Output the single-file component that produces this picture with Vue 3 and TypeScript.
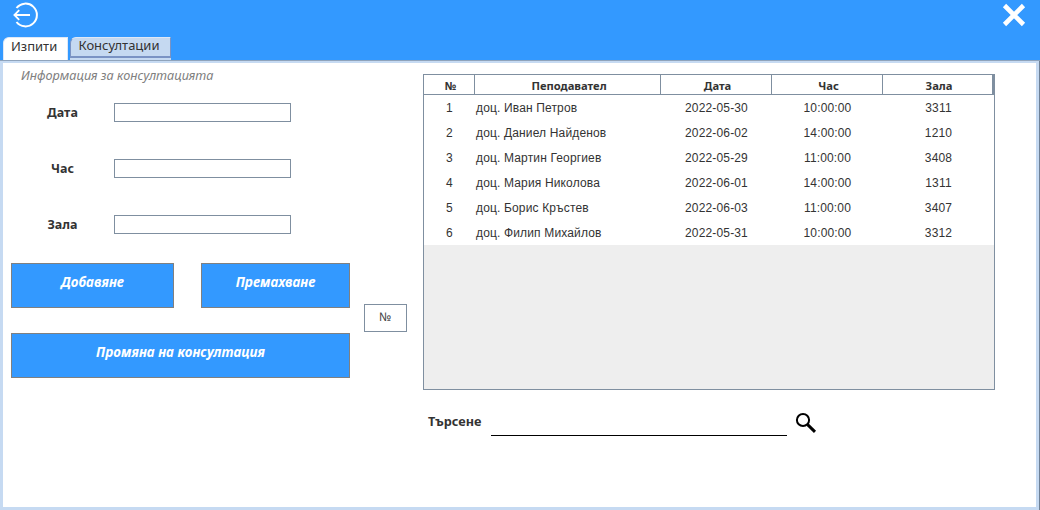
<template>
  <div class="app">
    <header class="top">
      <div class="top-row">
        <button type="button" class="icon-btn" aria-label="Назад">
          <svg width="27" height="27" viewBox="0 0 27 27" fill="none" stroke="#fff" stroke-width="2">
            <path d="M5.5 6A11.4 11.4 0 1 1 5.5 20" />
            <path d="M19 13H3.4M8.2 8.2 3.4 13l4.8 4.8" stroke-width="1.8" />
          </svg>
        </button>
        <button type="button" class="icon-btn close" aria-label="Затвори">
          <svg width="24" height="24" viewBox="0 0 24 24" stroke="#fff" stroke-width="4.6">
            <path d="M2.5 2.5 21.5 21.5M21.5 2.5 2.5 21.5" />
          </svg>
        </button>
      </div>
      <nav class="tabs">
        <button
          v-for="tab in tabs"
          :key="tab"
          type="button"
          class="tab"
          :class="{ active: tab === activeTab }"
          @click="activeTab = tab"
        >
          {{ tab }}
        </button>
      </nav>
    </header>

    <main class="body">
      <section class="left">
        <p class="legend">Информация за консултацията</p>
        <div class="fields">
          <label v-for="field in fields" :key="field" class="field">
            <span class="field-label">{{ field }}</span>
            <input class="field-input" type="text" />
          </label>
        </div>
        <div class="actions">
          <button type="button" class="action">Добавяне</button>
          <button type="button" class="action">Премахване</button>
          <button type="button" class="action wide">Промяна на консултация</button>
        </div>
      </section>

      <div class="middle">
        <div class="id-box">№</div>
      </div>

      <section class="right">
        <div class="table-wrap">
          <div class="thead">
            <div v-for="col in columns" :key="col" class="th">{{ col }}</div>
          </div>
          <div v-for="row in rows" :key="row.id" class="tr">
            <div class="td">{{ row.id }}</div>
            <div class="td name">{{ row.name }}</div>
            <div class="td">{{ row.date }}</div>
            <div class="td">{{ row.time }}</div>
            <div class="td">{{ row.room }}</div>
          </div>
        </div>
        <div class="search">
          <label class="search-label" for="q">Търсене</label>
          <input id="q" v-model="query" class="search-input" type="text" />
          <svg class="search-icon" width="22" height="22" viewBox="0 0 22 22" fill="none" stroke="#000">
            <circle cx="8" cy="8" r="6.1" stroke-width="2" />
            <path d="M12.6 12.6 20 19.8" stroke-width="3" />
          </svg>
        </div>
      </section>
    </main>
  </div>
</template>

<script setup lang="ts">
import { ref } from 'vue'

const tabs = ['Изпити', 'Консултации']
const activeTab = ref('Изпити')
const query = ref('')

const fields = ['Дата', 'Час', 'Зала']
const columns = ['№', 'Пеподавател', 'Дата', 'Час', 'Зала']

const rows = [
  { id: 1, name: 'доц. Иван Петров', date: '2022-05-30', time: '10:00:00', room: 3311 },
  { id: 2, name: 'доц. Даниел Найденов', date: '2022-06-02', time: '14:00:00', room: 1210 },
  { id: 3, name: 'доц. Мартин Георгиев', date: '2022-05-29', time: '11:00:00', room: 3408 },
  { id: 4, name: 'доц. Мария Николова', date: '2022-06-01', time: '14:00:00', room: 1311 },
  { id: 5, name: 'доц. Борис Кръстев', date: '2022-06-03', time: '11:00:00', room: 3407 },
  { id: 6, name: 'доц. Филип Михайлов', date: '2022-05-31', time: '10:00:00', room: 3312 }
]
</script>

<style>
html,
body {
  margin: 0;
  background: #fff;
}
</style>

<style scoped>
.app {
  width: 1040px;
  height: 510px;
  display: flex;
  flex-direction: column;
  overflow: hidden;
  font-family: "Noto Sans", "DejaVu Sans", sans-serif;
  color: #222;
}

.top {
  box-sizing: border-box;
  height: 61px;
  background: #3399ff;
  border-bottom: 1px solid #8fa3bb;
  display: flex;
  flex-direction: column;
  justify-content: space-between;
  flex: none;
}

.top-row {
  display: flex;
  justify-content: space-between;
  align-items: flex-start;
  padding: 2px 14px 0 11px;
}

.icon-btn {
  border: none;
  background: none;
  padding: 0;
  display: block;
  cursor: pointer;
}

.icon-btn svg {
  display: block;
}

.icon-btn.close {
  margin-top: 1px;
}

.tabs {
  display: flex;
  align-items: flex-start;
  padding-left: 3px;
  gap: 2px;
}

.tab {
  box-sizing: border-box;
  height: 21px;
  border: 1px solid #7a93c4;
  border-bottom-width: 2px;
  border-top-color: #dfe8f6;
  border-top-left-radius: 6px;
  background: #c5d9f1;
  box-shadow: 0 2px 0 #c6daf2;
  color: #333;
  font: 13px/15px "Noto Sans", "DejaVu Sans", sans-serif;
  padding: 0 10px 3px 7px;
  width: 101px;
  cursor: pointer;
}

.tab.active {
  width: 65px;
  height: 23px;
  background: #fff;
  box-shadow: none;
  border-bottom: none;
  border-color: #dfe8f6;
  color: #333;
  padding: 0 11px 6px 7px;
}

.body {
  flex: 1;
  box-sizing: border-box;
  display: flex;
  margin-right: 1px;
  border: 3px solid #c6daf2;
  border-top-width: 2px;
  min-height: 0;
  background: #fff;
  box-shadow: 1px 0 0 #6f8196;
}

.left {
  width: 347px;
  flex: none;
  box-sizing: border-box;
  padding-left: 8px;
}

.legend {
  margin: 4px 0 0 10px;
  font-size: 12.7px;
  line-height: 16px;
  font-style: italic;
  color: #808080;
}

.fields {
  margin-top: 20px;
  display: flex;
  flex-direction: column;
  gap: 37px;
}

.field {
  display: flex;
  align-items: center;
  height: 19px;
}

.field-label {
  width: 103px;
  text-align: center;
  font-size: 12.5px;
  font-weight: 700;
  color: #333;
}

.field-input {
  box-sizing: border-box;
  width: 177px;
  height: 19px;
  border: 1px solid #7f8fa0;
  padding: 0 3px;
  outline: none;
}

.actions {
  margin-top: 29px;
  display: grid;
  grid-template-columns: 163px 149px;
  column-gap: 27px;
  row-gap: 25px;
}

.action {
  height: 45px;
  box-sizing: border-box;
  border: 1px solid #808080;
  background: #3399ff;
  color: #fff;
  font: italic 700 13.5px/16px "Noto Sans", "DejaVu Sans", sans-serif;
  padding: 0 0 7px;
  cursor: pointer;
}

.action.wide {
  grid-column: 1 / -1;
}

.middle {
  width: 73px;
  flex: none;
  padding-top: 241px;
  box-sizing: border-box;
}

.id-box {
  margin-left: 14px;
  box-sizing: border-box;
  width: 43px;
  height: 28px;
  border: 1px solid #7f8fa0;
  font: 12px/23px "Noto Sans", "DejaVu Sans", sans-serif;
  text-align: center;
  padding-right: 1px;
  color: #444;
}

.right {
  flex: none;
  width: 572px;
  padding-top: 11px;
}

.table-wrap {
  box-sizing: border-box;
  height: 316px;
  border: 1px solid #7f8fa0;
  background: #eeeeee;
  font-family: "Liberation Sans", Arial, sans-serif;
}

.thead,
.tr {
  display: grid;
  grid-template-columns: 51px 186px 111px 111px 111px;
}

.thead {
  height: 20px;
  background: #fff;
}

.th {
  box-sizing: border-box;
  height: 20px;
  border-right: 1px solid #7f8fa0;
  border-bottom: 1px solid #7f8fa0;
  padding-left: 3px;
  text-align: center;
  font: 700 11.2px/21px "Noto Sans", "DejaVu Sans", sans-serif;
  color: #333;
}

.th:last-child {
  border-right-width: 2px;
}

.tr {
  height: 25px;
  background: #fff;
}

.td {
  height: 25px;
  text-align: center;
  font-size: 12px;
  letter-spacing: 0.15px;
  line-height: 26px;
  color: #333;
}

.td.name {
  text-align: left;
  padding-left: 1px;
}

.search {
  display: flex;
  align-items: flex-start;
  margin-top: 21px;
  padding-left: 5px;
}

.search-label {
  width: 63px;
  font-size: 12.7px;
  font-weight: 700;
  line-height: 20px;
  color: #333;
}

.search-input {
  box-sizing: border-box;
  width: 296px;
  height: 25px;
  border: none;
  border-bottom: 1px solid #000;
  outline: none;
  padding: 0 3px;
}

.search-icon {
  margin-left: 8px;
  margin-top: 1px;
}
</style>
